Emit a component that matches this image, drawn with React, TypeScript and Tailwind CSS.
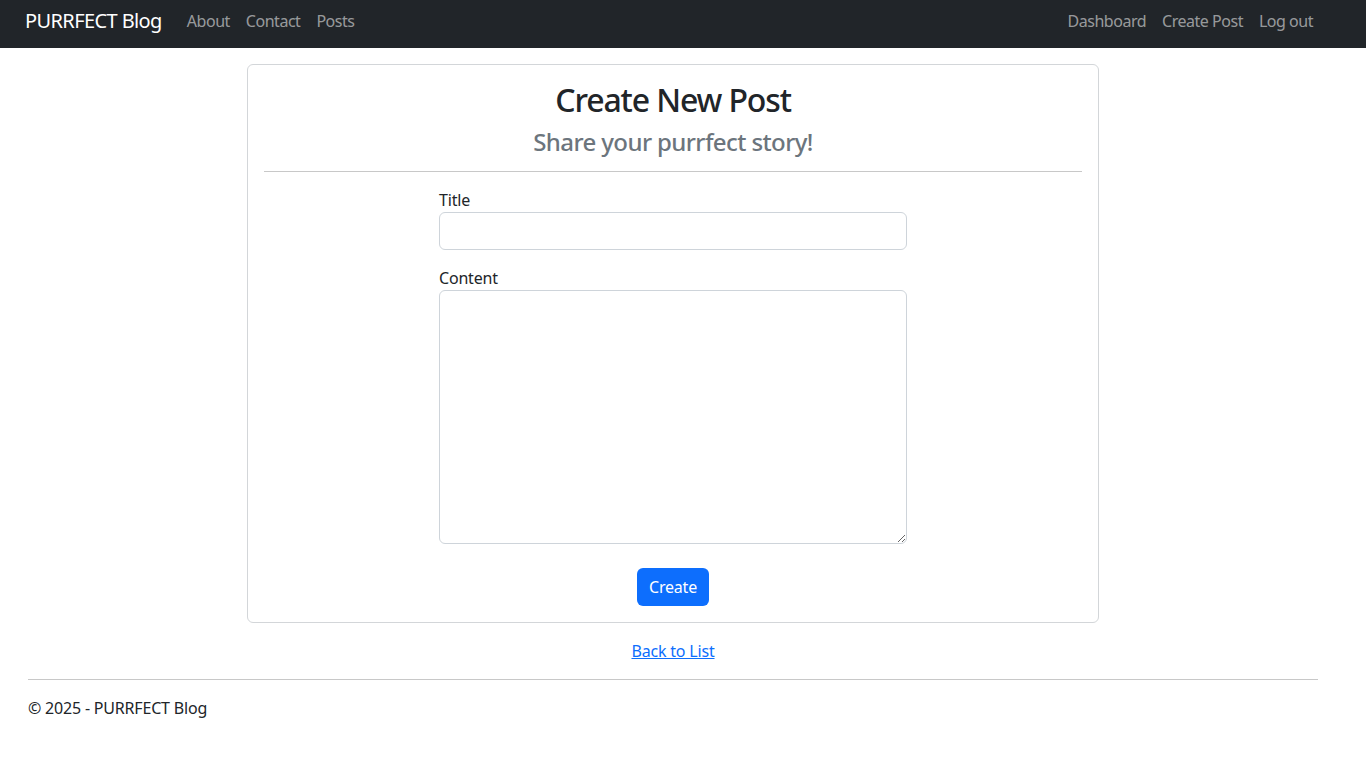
import React from "react";

export default function App() {
  const font = { fontFamily: '"Noto Sans", "Open Sans", sans-serif' };
  return (
    <div className="min-h-[776px] bg-white text-[#212529] tracking-[-0.012em]" style={font}>
      <nav className="h-[48px] bg-[#212529] flex items-center pl-[25px] pr-[45px] pb-[6px]">
        <a className="text-[20px] text-white leading-[30px] mr-[17px] tracking-[-0.03em]">PURRFECT Blog</a>
        <div className="flex text-[16px] text-[rgba(255,255,255,0.55)] tracking-[-0.03em]">
          <a className="px-2">About</a>
          <a className="px-2">Contact</a>
          <a className="px-2">Posts</a>
        </div>
        <div className="ml-auto flex text-[16px] text-[rgba(255,255,255,0.55)] tracking-[-0.03em]">
          <a className="px-2">Dashboard</a>
          <a className="px-2">Create Post</a>
          <a className="px-2">Log out</a>
        </div>
      </nav>
      <div className="ml-[28px] w-[1290px] pt-[16px]">
        <div className="mx-auto w-[852px] border border-[#d3d6d9] rounded-[6px] px-[16px] pt-[16px] pb-[16px]">
          <h1 className="text-center text-[32px] font-medium leading-[38px] mb-[8px] tracking-[-0.035em]">Create New Post</h1>
          <h3 className="text-center text-[24px] font-medium leading-[29px] text-[#6c757d] tracking-[-0.025em]">Share your purrfect story!</h3>
          <hr className="mt-[15px] mb-[16px] border-0 border-t border-[#c8c8c8]" />
          <div className="mx-auto w-[468px]">
            <label className="block text-[16px] leading-[24px]">Title</label>
            <input className="block w-full h-[38px] border border-[#ced4da] rounded-[6px] px-3 outline-none" />
            <label className="block text-[16px] leading-[24px] mt-[16px]">Content</label>
            <textarea className="block w-full h-[254px] border border-[#ced4da] rounded-[6px] px-3 py-1.5 outline-none" />
            <div className="flex justify-center mt-[24px]">
              <button className="h-[38px] w-[72px] bg-[#0d6efd] text-white text-[16px] rounded-[6px]">Create</button>
            </div>
          </div>
        </div>
        <div className="text-center mt-[16px] leading-[24px]">
          <a className="text-[#0d6efd] underline text-[16px]">Back to List</a>
        </div>
        <hr className="mt-[16px] border-0 border-t border-[#c8c8c8]" />
        <footer className="mt-[16px] text-[16px] leading-[24px]">© 2025 - PURRFECT Blog</footer>
      </div>
    </div>
  );
}
